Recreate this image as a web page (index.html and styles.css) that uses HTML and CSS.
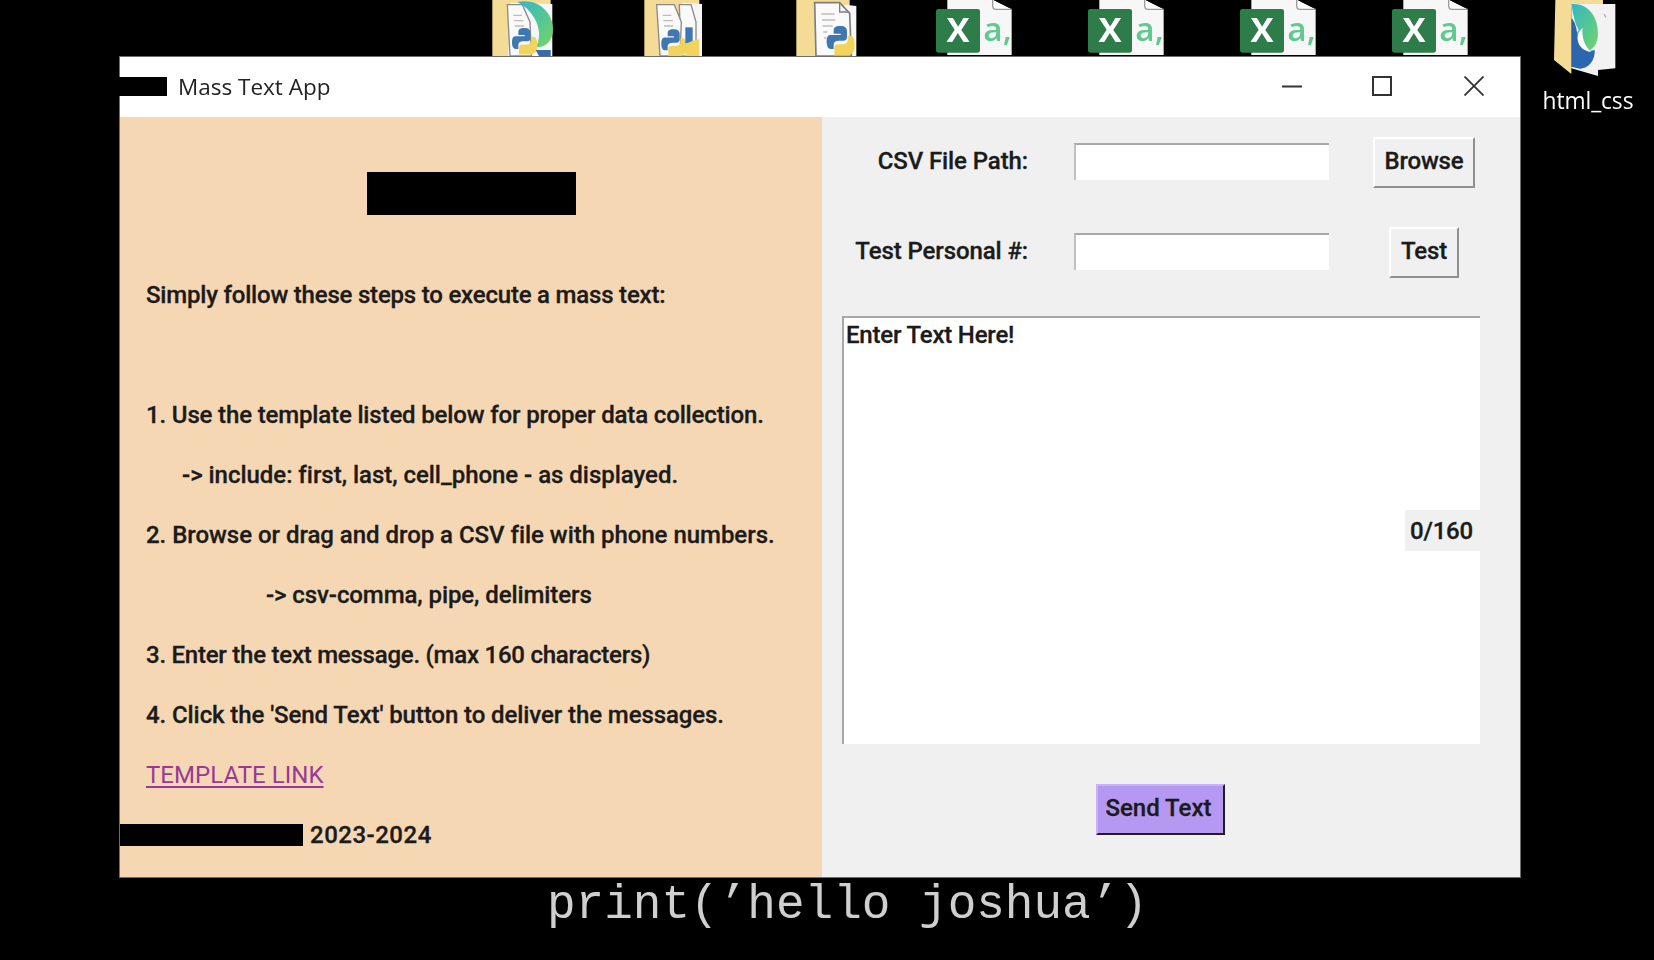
FILE: index.html
```html
<!DOCTYPE html>
<html lang="en">
<head>
<meta charset="utf-8">
<title>Mass Text App</title>
<link rel="stylesheet" href="styles.css">
</head>
<body>
<main class="desktop">
  <svg class="defs" width="0" height="0" aria-hidden="true">
    <defs>
      <linearGradient id="edgeGrad" x1="0" y1="0" x2="1" y2="1">
        <stop offset="0" stop-color="#35b5c8"/>
        <stop offset=".6" stop-color="#58c98c"/>
        <stop offset="1" stop-color="#78d46c"/>
      </linearGradient>
      <g id="python">
        <path d="M40 0 C22 0 20 6 20 14 L20 22 L40 22 L40 26 L10 26 C2 26 0 36 0 46 C0 58 4 66 12 66 L20 66 L20 54 C20 46 26 42 34 42 L48 42 C54 42 58 38 58 32 L58 14 C58 6 52 0 40 0 Z" fill="#3e77b2"/>
        <path d="M60 28 L60 40 C60 48 54 52 46 52 L32 52 C26 52 22 56 22 62 L22 84 L66 84 L66 80 C78 80 80 68 80 54 C80 40 76 28 68 28 Z" fill="#f2d35e"/>
      </g>
      <g id="excel">
        <path d="M52 0 H190 L245 30 V165 H52 Z" fill="#f7f7f7"/>
        <path d="M188 0 V18 Q188 28 198 28 H245" fill="#fff" stroke="#9a9a9a" stroke-width="4"/>
        <rect x="18" y="27" width="132" height="131" rx="7" fill="#2f7c4b"/>
        <text x="84" y="125" class="excel-x">X</text>
        <text x="160" y="122" class="excel-a">a,</text>
      </g>
    </defs>
  </svg>

  <svg class="icon icon-a" viewBox="0 0 240 180" aria-hidden="true">
    <path d="M25 0 H200 V168 H25 Z" fill="#f5dc96"/>
    <path d="M80 8 L205 12 V168 H72 Z" fill="#f7f7f7"/>
    <path d="M70 14 H115 L138 66 L142 168 H78 Z" fill="#fafafa" stroke="#8a8a8a" stroke-width="4"/>
    <path d="M88 46 h26 M90 62 h28 M92 78 h28" stroke="#bdbdbd" stroke-width="4"/>
    <path d="M100 6 C165 -6 207 40 207 88 C207 126 180 146 155 140 C176 112 168 42 100 6 Z" fill="url(#edgeGrad)"/>
    <use href="#python" transform="translate(84 84) scale(.95)"/>
    <path d="M155 150 H200 V168 H165 Z" fill="#2f6fae"/>
  </svg>

  <svg class="icon icon-b" viewBox="0 0 240 180" aria-hidden="true">
    <path d="M25 0 H190 V168 H25 Z" fill="#f5dc96"/>
    <path d="M140 8 L198 12 V168 H140 Z" fill="#f7f7f7"/>
    <path d="M130 14 H165 L180 66 V168 H135 Z" fill="#fafafa" stroke="#8a8a8a" stroke-width="4"/>
    <path d="M62 14 H115 L136 66 L132 168 H72 Z" fill="#fafafa" stroke="#8a8a8a" stroke-width="4"/>
    <path d="M80 46 h26 M82 62 h28 M84 78 h28" stroke="#bdbdbd" stroke-width="4"/>
    <use href="#python" transform="translate(76 88) scale(.95)"/>
    <path d="M148 82 H170 V130 H148 Z" fill="#3e77b2"/>
    <path d="M148 132 L170 122 L190 118 V168 H148 Z" fill="#f2d35e"/>
  </svg>

  <svg class="icon icon-c" viewBox="0 0 240 180" aria-hidden="true">
    <path d="M25 0 H185 V168 H25 Z" fill="#f5dc96"/>
    <path d="M170 14 L205 18 V168 H170 Z" fill="#f7f7f7"/>
    <path d="M80 8 H155 L185 40 L190 168 H84 Z" fill="#fafafa" stroke="#7e7e7e" stroke-width="5"/>
    <path d="M155 10 V36 H184" fill="none" stroke="#7e7e7e" stroke-width="4"/>
    <path d="M100 42 h40 M102 60 h40 M104 78 h30 M106 96 h12 M108 114 h8" stroke="#bdbdbd" stroke-width="5"/>
    <use href="#python" transform="translate(116 78) scale(1.05)"/>
  </svg>

  <svg class="icon-wide icon-d" viewBox="0 0 270 180" aria-hidden="true"><use href="#excel"/></svg>
  <svg class="icon-wide icon-e" viewBox="0 0 270 180" aria-hidden="true"><use href="#excel"/></svg>
  <svg class="icon-wide icon-f" viewBox="0 0 270 180" aria-hidden="true"><use href="#excel"/></svg>
  <svg class="icon-wide icon-g" viewBox="0 0 270 180" aria-hidden="true"><use href="#excel"/></svg>

  <figure class="shortcut">
    <svg class="shortcut-icon" viewBox="0 0 300 240" aria-hidden="true">
      <path d="M52 0 H195 V20 H100 V222 L48 180 Z" fill="#f5dc96"/>
      <path d="M100 12 L232 12 V205 L180 210 L180 228 L100 205 Z" fill="#f2f2f2"/>
      <path d="M198 42 l6 10" stroke="#aaa" stroke-width="4"/>
      <path d="M100 12 C150 8 180 50 180 100 C180 140 155 162 130 150 C108 138 108 105 122 90 C110 70 105 40 100 12 Z" fill="url(#edgeGrad)"/>
      <path d="M100 55 C108 60 116 80 118 105 C118 135 140 160 170 150 C172 170 160 205 125 206 L100 200 Z" fill="#2c66ae"/>
      <path d="M134 84 C110 100 112 150 160 156 C140 138 130 112 134 84 Z" fill="#fff"/>
    </svg>
    <figcaption class="shortcut-label">html_css</figcaption>
  </figure>

  <section class="window">
    <header class="titlebar">
      <span class="redact redact-title"></span>
      <span class="title">Mass Text App</span>
      <div class="controls">
        <svg class="ctl" viewBox="0 0 20 20" aria-hidden="true"><path d="M0 10.5 H20" stroke="#333" stroke-width="2"/></svg>
        <svg class="ctl ctl-max" viewBox="0 0 20 20" aria-hidden="true"><rect x="1" y="1" width="18" height="18" fill="none" stroke="#333" stroke-width="2"/></svg>
        <svg class="ctl" viewBox="0 0 20 20" aria-hidden="true"><path d="M0.5 0.5 L19.5 19.5 M19.5 0.5 L0.5 19.5" stroke="#333" stroke-width="1.8"/></svg>
      </div>
    </header>
    <div class="content">
      <aside class="help">
        <div class="redact redact-logo"></div>
        <p class="line sp-a">Simply follow these steps to execute a mass text:</p>
        <p class="line"></p>
        <p class="line sp-b">1. Use the template listed below for proper data collection.</p>
        <p class="line indent-s sp-c">-&gt; include: first, last, cell_phone - as displayed.</p>
        <p class="line sp-c">2. Browse or drag and drop a CSV file with phone numbers.</p>
        <p class="line indent-l sp-d">-&gt; csv-comma, pipe, delimiters</p>
        <p class="line sp-e">3. Enter the text message. (max 160 characters)</p>
        <p class="line sp-d">4. Click the 'Send Text' button to deliver the messages.</p>
        <p class="line sp-f"><a class="link" href="#">TEMPLATE LINK</a></p>
        <div class="line footer"><span class="redact redact-name"></span><span class="years">2023-2024</span></div>
      </aside>
      <div class="form">
        <div class="fields">
          <label class="field-label" for="csv">CSV File Path:</label>
          <input class="entry" id="csv" type="text">
          <button class="btn" type="button">Browse</button>
          <label class="field-label" for="num">Test Personal #:</label>
          <input class="entry" id="num" type="text">
          <button class="btn" type="button">Test</button>
        </div>
        <div class="message">
          <textarea class="message-input">Enter Text Here!</textarea>
          <span class="counter">0/160</span>
        </div>
        <div class="send-row"><button class="btn btn-send" type="button">Send Text</button></div>
      </div>
    </div>
  </section>

  <p class="caption">print(’hello joshua’)</p>
</main>
</body>
</html>
```

FILE: styles.css
```css
* { box-sizing: border-box; }
html, body { margin: 0; height: 100%; background: #000; overflow: hidden; }
.desktop { position: relative; width: 1654px; height: 960px; background: #000; overflow: hidden; font-family: Roboto, "Liberation Sans", sans-serif; }
.defs { position: absolute; }

.icon, .icon-wide { position: absolute; top: 0; height: 60px; filter: blur(.7px); }
.icon { width: 80px; }
.icon-wide { width: 90px; }
.icon-a { left: 484px; }
.icon-b { left: 636px; }
.icon-c { left: 788px; }
.icon-d { left: 930px; }
.icon-e { left: 1082px; }
.icon-f { left: 1234px; }
.icon-g { left: 1386px; }
.excel-x { font: 700 104px "Open Sans", sans-serif; fill: #fff; text-anchor: middle; }
.excel-a { font: 600 100px "Open Sans", sans-serif; fill: #5fca8e; }

.shortcut { position: absolute; left: 1538px; top: 0; width: 100px; margin: 0; display: flex; flex-direction: column; align-items: center; }
.shortcut-icon { width: 100px; height: 80px; filter: blur(.7px); }
.shortcut-label { margin-top: 7px; font: 400 22.8px/28px "Open Sans", sans-serif; letter-spacing: -.1px; color: #fff; filter: blur(.4px); }

.window { position: absolute; left: 120px; top: 57px; width: 1400px; height: 820px; display: flex; flex-direction: column; background: #f0f0f0; box-shadow: 0 0 0 1px #6e6e6e; }
.titlebar { position: relative; flex: 0 0 60px; display: flex; align-items: center; background: #fff; padding-left: 58px; }
.title { font: 400 22.5px/1 "Open Sans", sans-serif; color: #222; filter: blur(.4px); }
.controls { margin-left: auto; display: flex; align-items: center; gap: 70px; padding-right: 36px; padding-bottom: 3px; }
.ctl { width: 20px; height: 20px; display: block; filter: blur(.3px); }
.ctl-max { margin-right: 2px; }

.redact { display: block; background: #000; }
.redact-title { position: absolute; left: -1px; top: 20px; width: 48px; height: 19px; }
.redact-logo { flex: none; width: 209px; height: 43px; margin: 55px 0 49px 247px; }
.redact-name { width: 183px; height: 22px; }

.content { flex: 1; display: flex; min-height: 0; }
.help { flex: 0 0 702px; display: flex; flex-direction: column; background: #f6d7b3; color: #1b1b1b; font-size: 24px; font-weight: 500; -webkit-text-stroke: .3px #1b1b1b; }
.line { flex: none; height: 60px; margin: 0; display: flex; align-items: center; padding: 2px 0 0 26px; white-space: nowrap; }
.sp-a { letter-spacing: -.2px; }
.sp-b { letter-spacing: -.15px; }
.sp-c { letter-spacing: -.03px; }
.sp-d { letter-spacing: -.09px; }
.sp-e { letter-spacing: -.24px; }
.sp-f { letter-spacing: .05px; }
.indent-s { padding-left: 62px; }
.indent-l { padding-left: 146px; }
.footer { padding-left: 0; gap: 7px; }
.years { letter-spacing: .5px; }
.link { color: #973a97; font-weight: 400; -webkit-text-stroke: 0; text-decoration: underline; text-underline-offset: 3px; }

.form { flex: 1; display: flex; flex-direction: column; padding-top: 20px; color: #1b1b1b; font-size: 24px; font-weight: 500; -webkit-text-stroke: .3px #1b1b1b; }
.fields { display: grid; grid-template-columns: 206px 255px 98px; grid-auto-rows: 51px; column-gap: 46px; row-gap: 39px; align-items: center; }
.field-label { justify-self: end; white-space: nowrap; padding-bottom: 3px; letter-spacing: -.1px; }
.entry { height: 37px; width: 255px; margin-bottom: 3px; border: 0; border-top: 2px solid #a8a8a8; border-left: 2px solid #c0c0c0; background: #fff; padding: 0; outline: none; }
.btn { justify-self: center; height: 51px; padding: 0 10px 4px; background: #f0f0f0; color: #1b1b1b; font: inherit; letter-spacing: -.2px; border: 2px solid; border-color: #fff #8f8f8f #8f8f8f #fff; border-radius: 0; }
.message { position: relative; width: 638px; height: 428px; margin: 38px 0 0 20px; }
.message-input { display: block; width: 100%; height: 100%; resize: none; overflow: hidden; border: 0; border-top: 2px solid #a8a8a8; border-left: 2px solid #a8a8a8; background: #fff; padding: 1px 2px; margin: 0; font: inherit; color: inherit; letter-spacing: -.2px; outline: none; line-height: 32px; }
.counter { position: absolute; right: 0; top: 194px; width: 75px; height: 41px; padding-right: 2px; background: #f0f0f0; display: flex; align-items: center; justify-content: center; letter-spacing: -.2px; }
.send-row { display: flex; justify-content: center; margin: 40px 0 0 0; padding-right: 21px; }
.btn-send { width: 129px; padding: 0 4px 4px 0; letter-spacing: 0; background: #b498f2; border-color: #c6b2f6 #1f1f1f #1f1f1f #c6b2f6; }

.caption { position: absolute; left: 547px; top: 875px; margin: 0; font: 400 47.7px/60px "Liberation Mono", monospace; color: #cfcfcf; white-space: nowrap; filter: blur(.3px); }
```
